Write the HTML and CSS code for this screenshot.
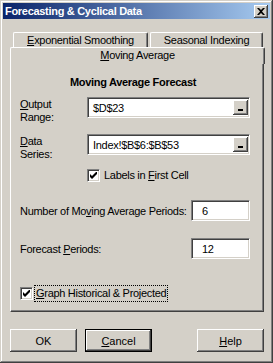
FILE: index.html
```html
<!DOCTYPE html>
<html lang="en">
<head>
  <meta charset="UTF-8">
  <title>Forecasting &amp; Cyclical Data</title>
  <link rel="stylesheet" href="styles.css">
</head>
<body>
  <div class="window">
    <div class="titlebar">
      <span class="title">Forecasting &amp; Cyclical Data</span>
      <span class="close">
        <svg width="8" height="7" viewBox="0 0 8 7"><path d="M0 0h2l2 2l2-2h2l-3 3.5l3 3.5h-2l-2-2l-2 2h-2l3-3.5z" fill="#000"/></svg>
      </span>
    </div>

    <div class="tabs">
      <div class="tab-row back">
        <div class="tab tab-exp"><u>E</u>xponential Smoothing</div>
        <div class="tab tab-season">Seasonal Indexing</div>
      </div>
      <div class="tab-row front">
        <div class="tab selected"><u>M</u>oving Average</div>
      </div>
    </div>

    <div class="panel">
      <div class="heading">Moving Average Forecast</div>

      <div class="range-row">
        <label class="range-label"><u>O</u>utput<br>Range:</label>
        <div class="field range">
          <span class="value">$D$23</span>
          <span class="collapse"><i></i></span>
        </div>
      </div>

      <div class="range-row second">
        <label class="range-label"><u>D</u>ata<br>Series:</label>
        <div class="field range">
          <span class="value">Index!$B$6:$B$53</span>
          <span class="collapse"><i></i></span>
        </div>
      </div>

      <div class="check-row indent">
        <span class="checkbox">
          <svg width="7" height="7" viewBox="0 0 7 7"><path d="M0 2v3l2 2l5-5v-3l-5 5z" fill="#000"/></svg>
        </span>
        <span>Labels in <u>F</u>irst Cell</span>
      </div>

      <div class="num-row">
        <label>Number of Mo<u>v</u>ing Average Periods:</label>
        <div class="field num"><span class="value">6</span></div>
      </div>

      <div class="num-row second">
        <label>Forecast <u>P</u>eriods:</label>
        <div class="field num"><span class="value">12</span></div>
      </div>

      <div class="check-row graph">
        <span class="checkbox">
          <svg width="7" height="7" viewBox="0 0 7 7"><path d="M0 2v3l2 2l5-5v-3l-5 5z" fill="#000"/></svg>
        </span>
        <span class="focus"><u>G</u>raph Historical &amp; Projected</span>
      </div>
    </div>

    <div class="buttons">
      <button class="btn">OK</button>
      <button class="btn default"><u>C</u>ancel</button>
      <button class="btn help"><u>H</u>elp</button>
    </div>
  </div>
</body>
</html>
```

FILE: styles.css
```css
body {
  margin: 0;
  background: #d4d0c8;
  font-family: "Liberation Sans", Arial, sans-serif;
  font-size: 11px;
  letter-spacing: -0.3px;
  color: #000;
  white-space: nowrap;
}
u {
  text-decoration: underline;
  text-underline-offset: 1px;
}
.window {
  width: 273px;
  height: 363px;
  box-sizing: border-box;
  padding: 3px;
  background: #d4d0c8;
  box-shadow: inset -1px -1px #404040, inset 1px 1px #d4d0c8,
              inset -2px -2px #808080, inset 2px 2px #fff;
}
.titlebar {
  height: 16px;
  display: flex;
  align-items: center;
  justify-content: space-between;
  padding: 0 2px 0 2px;
  background: linear-gradient(to right, #0a246a, #a6caf0);
}
.title {
  color: #fff;
  font-weight: bold;
  font-size: 11px;
}
.close {
  width: 14px;
  height: 13px;
  display: flex;
  align-items: center;
  justify-content: center;
  background: #d4d0c8;
  box-shadow: inset -1px -1px #404040, inset 1px 1px #fff,
              inset -2px -2px #808080;
}

/* tab strip */
.tabs {
  margin: 13px 0 0 7px;
  width: 255px;
}
.tab-row {
  display: flex;
  height: 15px;
}
.tab-row.back {
  padding-left: 3px;
  gap: 2px;
}
.tab {
  box-sizing: border-box;
  height: 15px;
  line-height: 14px;
  text-align: center;
  border-top: 1px solid #fff;
  border-left: 1px solid #fff;
  border-right: 1px solid #404040;
  border-radius: 2px 2px 0 0;
  box-shadow: inset -1px 0 #808080;
}
.tab-exp { width: 135px; }
.tab-season { width: 113px; }
.tab.selected {
  width: 255px;
  height: 17px;
  position: relative;
  z-index: 1;
  background: #d4d0c8;
}

/* page */
.panel {
  box-sizing: border-box;
  margin-left: 7px;
  width: 254px;
  height: 250px;
  padding: 13px 13px 0 9px;
  border-top: 1px solid #fff;
  border-left: 1px solid #fff;
  border-right: 1px solid #404040;
  border-bottom: 1px solid #404040;
  box-shadow: inset -1px -1px #808080;
}
.heading {
  font-weight: bold;
  text-align: center;
  line-height: 13px;
  margin-left: -4px;
}
.range-row {
  display: flex;
  margin-top: 8px;
}
.range-row.second {
  margin-top: 10px;
}
.range-label {
  width: 67px;
  line-height: 13px;
  padding-top: 1px;
}
.field {
  box-sizing: border-box;
  display: flex;
  align-items: center;
  background: #fff;
  border-top: 1px solid #808080;
  border-left: 1px solid #808080;
  border-right: 1px solid #fff;
  border-bottom: 1px solid #fff;
  box-shadow: inset 1px 1px #404040, inset -1px -1px #d4d0c8;
}
.field.range {
  flex: 1;
  height: 21px;
  padding: 0 1px 0 5px;
}
.value {
  flex: 1;
}
.collapse {
  width: 15px;
  height: 15px;
  display: flex;
  align-items: flex-end;
  justify-content: center;
  background: #d4d0c8;
  box-shadow: inset -1px -1px #404040, inset 1px 1px #fff,
              inset -2px -2px #808080;
}
.collapse i {
  width: 5px;
  height: 2px;
  margin-bottom: 4px;
  background: #000;
}
.check-row {
  display: flex;
  align-items: center;
  gap: 4px;
  line-height: 13px;
}
.check-row.indent {
  margin: 8px 0 0 67px;
}
.check-row.graph {
  margin-top: 26px;
  gap: 1px;
}
.checkbox {
  box-sizing: border-box;
  width: 13px;
  height: 13px;
  display: flex;
  align-items: center;
  justify-content: center;
  background: #fff;
  border-top: 1px solid #808080;
  border-left: 1px solid #808080;
  border-right: 1px solid #fff;
  border-bottom: 1px solid #fff;
  box-shadow: inset 1px 1px #404040, inset -1px -1px #d4d0c8;
}
.focus {
  padding: 1px 1px;
  border: 1px dotted #000;
}
.num-row {
  display: flex;
  align-items: center;
  justify-content: space-between;
  margin-top: 18px;
}
.num-row.second {
  margin-top: 17px;
}
.field.num {
  width: 59px;
  height: 21px;
  padding-left: 10px;
}

/* dialog buttons */
.buttons {
  display: flex;
  margin: 17px 0 0 7px;
  width: 254px;
}
.btn {
  box-sizing: border-box;
  width: 67px;
  height: 23px;
  margin-right: 8px;
  padding: 0;
  font: inherit;
  color: #000;
  background: #d4d0c8;
  border: none;
  box-shadow: inset -1px -1px #404040, inset 1px 1px #fff,
              inset -2px -2px #808080, inset 2px 2px #d4d0c8;
}
.btn.default {
  border: 1px solid #000;
}
.btn.help {
  margin: 0 0 0 auto;
}
```
